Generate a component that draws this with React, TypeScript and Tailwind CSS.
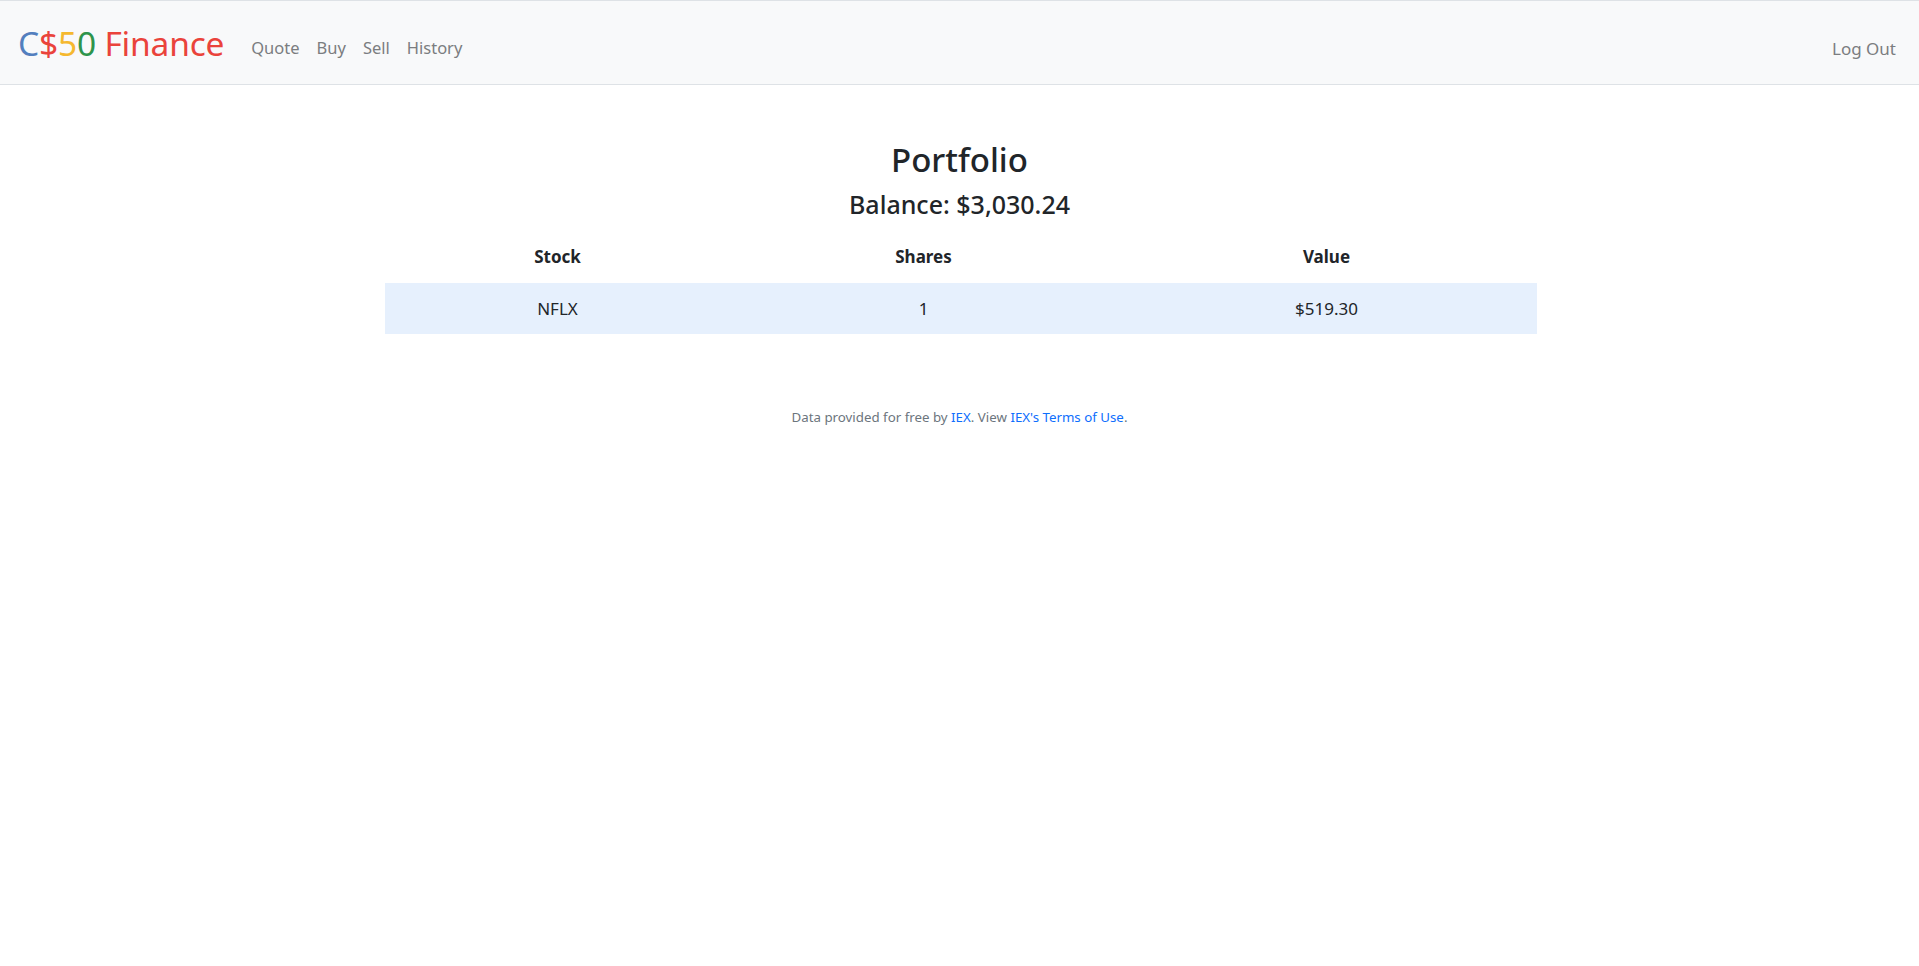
import React from 'react';

const font = { fontFamily: '"Noto Sans", "Open Sans", sans-serif' };

const holdings = [{ symbol: 'NFLX', shares: 1, value: '$519.30' }];

const NavBar: React.FC = () => (
  <nav className="flex items-center h-[85px] px-[18px] bg-[#f8f9fa] border-y border-[#dee2e6]">
    <a className="text-[33.5px] leading-none pt-[3px] mr-[27px] tracking-[-0.2px]">
      <span className="text-[#537fbe]">C</span>
      <span className="text-[#ea433b]">$</span>
      <span className="text-[#f5b82e]">5</span>
      <span className="text-[#2e944b]">0</span>{' '}
      <span className="text-[#ea433b]">Finance</span>
    </a>
    <ul className="flex items-center gap-[17px] pt-[12px] text-[16.5px] text-[#7b7d80]">
      <li>Quote</li>
      <li>Buy</li>
      <li>Sell</li>
      <li>History</li>
    </ul>
    <div className="ml-auto pt-[12px] pr-[5px] text-[17px] text-[#7b7d80]">Log Out</div>
  </nav>
);

export default function App() {
  return (
    <div className="min-h-screen bg-white text-[#212529]" style={font}>
      <NavBar />
      <main className="flex flex-col items-center">
        <h1 className="mt-[54px] text-[33px] leading-[41px] font-medium">Portfolio</h1>
        <h5 className="mt-[9px] text-[25px] leading-[30px] font-medium">Balance: $3,030.24</h5>
        <table className="mt-[13px] ml-[2px] w-[1152px] table-fixed text-center text-[17px]">
          <colgroup>
            <col className="w-[346px]" />
            <col className="w-[386px]" />
            <col className="w-[420px]" />
          </colgroup>
          <thead>
            <tr className="h-[51px]">
              <th className="font-bold pb-[2px]">Stock</th>
              <th className="font-bold pb-[2px]">Shares</th>
              <th className="font-bold pb-[2px]">Value</th>
            </tr>
          </thead>
          <tbody>
            {holdings.map(h => (
              <tr key={h.symbol} className="h-[51px] bg-[#e6f0fd]">
                <td>{h.symbol}</td>
                <td>{h.shares}</td>
                <td>{h.value}</td>
              </tr>
            ))}
          </tbody>
        </table>
        <footer className="mt-[73px] text-[13.3px] leading-[20px] text-[#6c757d]">
          Data provided for free by <a className="text-[#0d6efd]">IEX</a>. View{' '}
          <a className="text-[#0d6efd]">IEX's Terms of Use</a>.
        </footer>
      </main>
    </div>
  );
}
